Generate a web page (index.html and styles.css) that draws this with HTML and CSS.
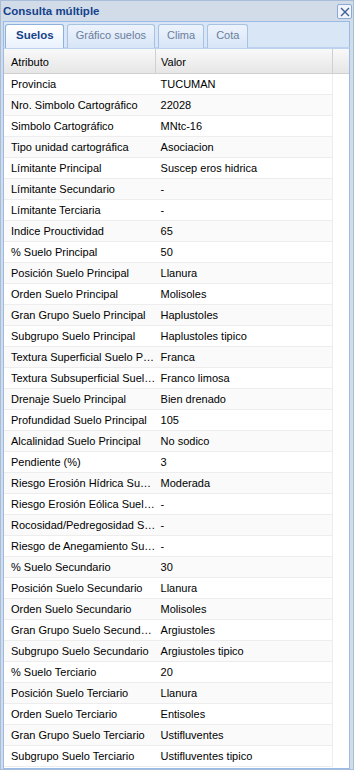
FILE: index.html
```html
<!DOCTYPE html>
<html lang="es">
<head>
    <meta charset="UTF-8">
    <title>Consulta múltiple</title>
    <link rel="stylesheet" href="styles.css">
</head>
<body>
    <div class="window">
        <div class="window-header">
            <span class="window-title">Consulta múltiple</span>
            <span class="close-btn">
                <svg width="10" height="10" viewBox="0 0 10 10"><path d="M1 1 L9 9 M9 1 L1 9" stroke="#3f5f95" stroke-width="1.4"/></svg>
            </span>
        </div>

        <ul class="tab-strip">
            <li class="tab active">Suelos</li>
            <li class="tab">Gráfico suelos</li>
            <li class="tab">Clima</li>
            <li class="tab">Cota</li>
        </ul>

        <div class="grid">
            <div class="grid-header">
                <div class="col-attr">Atributo</div>
                <div class="col-val">Valor</div>
                <div class="col-pad"></div>
            </div>
            <div class="grid-body" id="rows"></div>
        </div>
    </div>

    <script>
        // datos de la consulta
        const data = [
            ['Provincia', 'TUCUMAN'],
            ['Nro. Simbolo Cartográfico', '22028'],
            ['Simbolo Cartográfico', 'MNtc-16'],
            ['Tipo unidad cartográfica', 'Asociacion'],
            ['Límitante Principal', 'Suscep eros hidrica'],
            ['Límitante Secundario', '-'],
            ['Límitante Terciaria', '-'],
            ['Indice Prouctividad', '65'],
            ['% Suelo Principal', '50'],
            ['Posición Suelo Principal', 'Llanura'],
            ['Orden Suelo Principal', 'Molisoles'],
            ['Gran Grupo Suelo Principal', 'Haplustoles'],
            ['Subgrupo Suelo Principal', 'Haplustoles tipico'],
            ['Textura Superficial Suelo Principal', 'Franca'],
            ['Textura Subsuperficial Suelo Principal', 'Franco limosa'],
            ['Drenaje Suelo Principal', 'Bien drenado'],
            ['Profundidad Suelo Principal', '105'],
            ['Alcalinidad Suelo Principal', 'No sodico'],
            ['Pendiente (%)', '3'],
            ['Riesgo Erosión Hídrica Suelo Principal', 'Moderada'],
            ['Riesgo Erosión Eólica Suelo Principal', '-'],
            ['Rocosidad/Pedregosidad Suelo Principal', '-'],
            ['Riesgo de Anegamiento Suelo Principal', '-'],
            ['% Suelo Secundario', '30'],
            ['Posición Suelo Secundario', 'Llanura'],
            ['Orden Suelo Secundario', 'Molisoles'],
            ['Gran Grupo Suelo Secundario', 'Argiustoles'],
            ['Subgrupo Suelo Secundario', 'Argiustoles tipico'],
            ['% Suelo Terciario', '20'],
            ['Posición Suelo Terciario', 'Llanura'],
            ['Orden Suelo Terciario', 'Entisoles'],
            ['Gran Grupo Suelo Terciario', 'Ustifluventes'],
            ['Subgrupo Suelo Terciario', 'Ustifluventes tipico']
        ];

        const rows = document.getElementById('rows');
        data.forEach(function(d) {
            const row = document.createElement('div');
            row.className = 'grid-row';
            row.innerHTML = '<div class="col-attr"></div><div class="col-val"></div>';
            row.children[0].textContent = d[0];
            row.children[1].textContent = d[1];
            rows.appendChild(row);
        });
    </script>
</body>
</html>
```

FILE: styles.css
```css
* {
    margin: 0;
    padding: 0;
    box-sizing: border-box;
}

body {
    font-family: "Liberation Sans", Arial, sans-serif;
    font-size: 11px;
    background: #cfdaea;
}

.window {
    width: 354px;
    height: 770px;
    background: #d2dce9;
    border: 1px solid #a9bdd8;
    padding: 0 3px 0 2px;
    overflow: hidden;
}

.window-header {
    height: 20px;
    display: flex;
    align-items: center;
    justify-content: space-between;
}

.window-title {
    font-weight: bold;
    font-size: 11.5px;
    color: #15428b;
}

.close-btn {
    width: 15px;
    height: 15px;
    margin-top: 1px;
    margin-right: -2px;
    border: 1px solid #8ca9d4;
    border-radius: 2px;
    background: #f1f5fb;
    display: flex;
    align-items: center;
    justify-content: center;
}

.tab-strip {
    list-style: none;
    display: flex;
    gap: 3px;
    height: 26px;
    padding: 2px 0 0 1px;
    background: #d9e6f5;
    border: 1px solid #99bbe8;
    border-bottom: none;
}

.tab {
    font-size: 11px;
    color: #6a7d9c;
    padding: 0 8px;
    height: 24px;
    line-height: 20px;
    background: linear-gradient(#edf3fc, #d7e5f7);
    border: 1px solid #a8c2e4;
    border-bottom: none;
    border-radius: 3px 3px 0 0;
}

.tab.active {
    color: #15428b;
    font-weight: bold;
    font-size: 11.5px;
    background: linear-gradient(#ffffff, #eaf2fd);
    padding: 0 9px 0 10px;
    border-color: #8eb0dd;
}

.grid {
    background: #fff;
    border: 1px solid #99bbe8;
    border-top: 2px solid #bcd2ef;
    height: 722px;
    font-size: 11px;
    color: #000;
}

.grid-header {
    display: flex;
    height: 25px;
    background: linear-gradient(#f9f9f9, #e6e6e6);
    border-bottom: 1px solid #d0d0d0;
}

.grid-header > div {
    line-height: 26px;
    border-right: 1px solid #d0d0d0;
}

.col-attr {
    width: 152px;
    padding-left: 7px;
    white-space: nowrap;
    overflow: hidden;
    text-overflow: ellipsis;
}

.col-val {
    width: 177px;
    padding-left: 5px;
    white-space: nowrap;
    overflow: hidden;
    text-overflow: ellipsis;
}

.col-pad {
    flex: 1;
    border-right: none !important;
}

.grid-row {
    display: flex;
    width: 329px;
    height: 21px;
    line-height: 21px;
    border-bottom: 1px solid #ededed;
    border-right: 1px solid #ededed;
    overflow: hidden;
}

.grid-row:nth-child(even) {
    background: #fafafa;
}
```
